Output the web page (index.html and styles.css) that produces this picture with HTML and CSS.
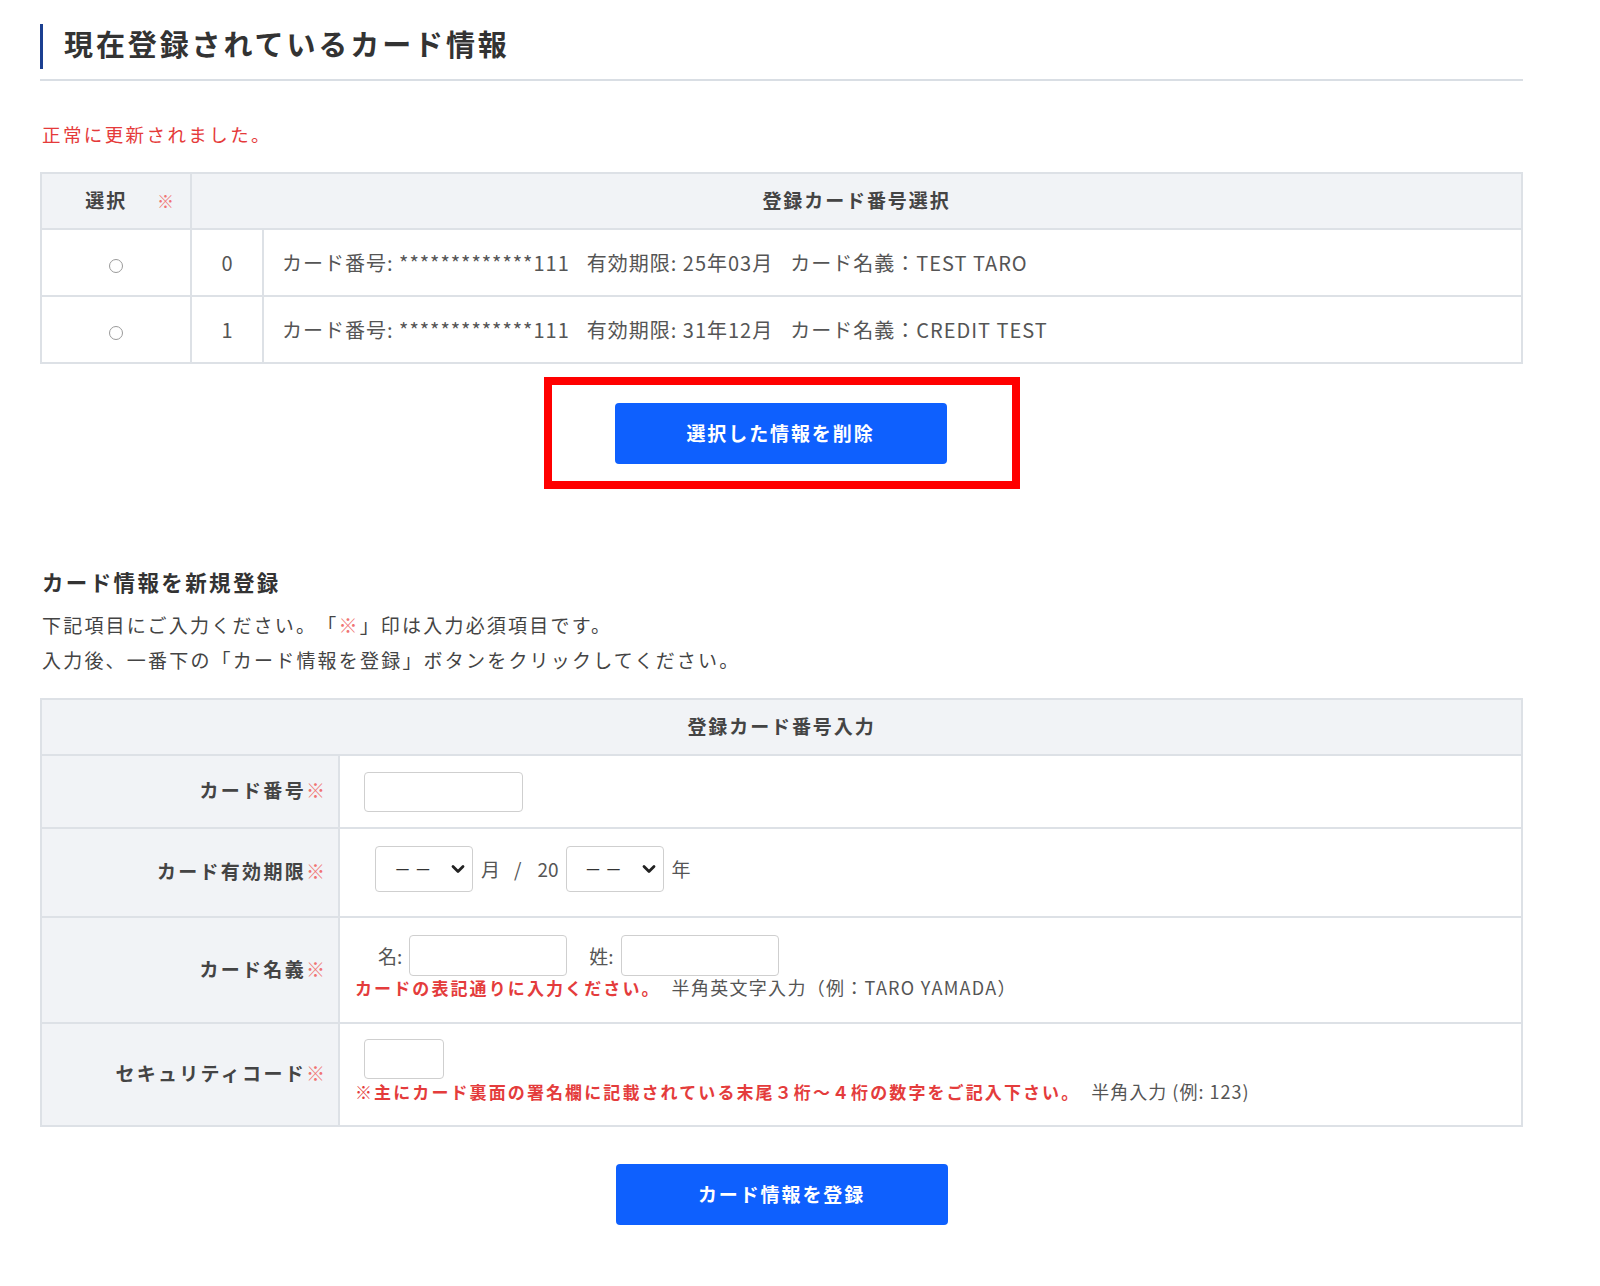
FILE: index.html
```html
<!DOCTYPE html>
<html lang="ja">
<head>
<meta charset="utf-8">
<title>カード情報</title>
<link rel="stylesheet" href="styles.css">
</head>
<body>
<div class="page">
  <div class="title-wrap">
    <h2 class="title">現在登録されているカード情報</h2>
  </div>
  <p class="msg">正常に更新されました。</p>

  <table class="cards">
    <tr class="head">
      <th class="c-sel">選択<span class="req req-gap">※</span></th>
      <th colspan="2">登録カード番号選択</th>
    </tr>
    <tr>
      <td class="c-sel center"><span class="radio"></span></td>
      <td class="c-no center">0</td>
      <td class="c-info"><span class="seg">カード番号: *************111</span><span class="seg">有効期限: 25年03月</span><span>カード名義：TEST TARO</span></td>
    </tr>
    <tr>
      <td class="c-sel center"><span class="radio"></span></td>
      <td class="c-no center">1</td>
      <td class="c-info"><span class="seg">カード番号: *************111</span><span class="seg">有効期限: 31年12月</span><span>カード名義：CREDIT TEST</span></td>
    </tr>
  </table>

  <div class="actions">
    <div class="highlight">
      <button class="btn" type="button">選択した情報を削除</button>
    </div>
  </div>

  <h3 class="sub">カード情報を新規登録</h3>
  <p class="note">下記項目にご入力ください。「<span class="req">※</span>」印は入力必須項目です。<br>入力後、一番下の「カード情報を登録」ボタンをクリックしてください。</p>

  <table class="form">
    <tr class="head">
      <th colspan="2">登録カード番号入力</th>
    </tr>
    <tr class="r1">
      <th class="lbl">カード番号<span class="req">※</span></th>
      <td class="val"><input class="inp inp-num" type="text"></td>
    </tr>
    <tr class="r2">
      <th class="lbl">カード有効期限<span class="req">※</span></th>
      <td class="val">
        <div class="exp">
          <div class="sel">
            <select><option>－－</option></select>
            <svg class="chev" width="14" height="10" viewBox="0 0 14 10"><path d="M2 2.5 L7 7.5 L12 2.5" fill="none" stroke="#222" stroke-width="2.8" stroke-linecap="round" stroke-linejoin="round"/></svg>
          </div>
          <span class="unit u-month">月</span>
          <span class="unit slash">/</span>
          <span class="unit u-20">20</span>
          <div class="sel sel2">
            <select><option>－－</option></select>
            <svg class="chev" width="14" height="10" viewBox="0 0 14 10"><path d="M2 2.5 L7 7.5 L12 2.5" fill="none" stroke="#222" stroke-width="2.8" stroke-linecap="round" stroke-linejoin="round"/></svg>
          </div>
          <span class="unit u-year">年</span>
        </div>
      </td>
    </tr>
    <tr class="r3">
      <th class="lbl">カード名義<span class="req">※</span></th>
      <td class="val">
        <div class="names">
          <label class="nm">名:</label><input class="inp inp-name" type="text">
          <label class="nm nm2">姓:</label><input class="inp inp-name" type="text">
        </div>
        <p class="hint"><span class="hint-red">カードの表記通りに入力ください。</span><span class="hint-gray">半角英文字入力（例：TARO YAMADA）</span></p>
      </td>
    </tr>
    <tr class="r4">
      <th class="lbl">セキュリティコード<span class="req">※</span></th>
      <td class="val">
        <input class="inp inp-cvc" type="text">
        <p class="hint"><span class="hint-red">※主にカード裏面の署名欄に記載されている末尾３桁～４桁の数字をご記入下さい。</span><span class="hint-gray">半角入力 (例: 123)</span></p>
      </td>
    </tr>
  </table>

  <div class="actions2">
    <button class="btn" type="button">カード情報を登録</button>
  </div>
</div>
</body>
</html>
```
FILE: styles.css
```css
* { box-sizing: border-box; }
html, body { margin: 0; padding: 0; background: #fff; }
body {
  font-family: "Noto Sans CJK JP", "Noto Sans", sans-serif;
  color: #333;
  font-size: 19px;
  text-spacing-trim: space-all;
}
.page {
  width: 1483px;
  margin-left: 40px;
  padding-top: 24px;
  padding-bottom: 60px;
}
.title-wrap {
  border-bottom: 2px solid #d9dee4;
  padding-bottom: 10px;
}
.title {
  margin: 0;
  border-left: 3px solid #1b3f91;
  padding-left: 21px;
  height: 45px;
  line-height: 38px;
  font-size: 29px;
  font-weight: 700;
  letter-spacing: 0.1em;
  color: #333;
}
.msg {
  margin: 40px 0 0 2px;
  font-size: 18.5px;
  line-height: 26px;
  letter-spacing: 0.13em;
  color: #e53a3a;
}
.req { color: #f07373; font-weight: 400; }
.req-gap { margin-left: 30px; font-size: 17px; }

table {
  border-collapse: collapse;
  width: 100%;
}
th, td {
  border: 2px solid #dde1e6;
  padding: 0;
}
.cards { margin-top: 25px; }
.cards .head th {
  background: #f1f3f6;
  height: 56px;
  font-size: 19px;
  font-weight: 700;
  letter-spacing: 0.1em;
  color: #444;
  text-align: center;
  padding-bottom: 3px;
}
.cards .head th.c-sel { text-align: right; padding-right: 14px; }
.cards td { height: 67px; font-size: 20px; color: #555; }
.c-sel { width: 150px; }
.c-no { width: 72px; letter-spacing: 0; }
.center { text-align: center; }
.c-info { padding-left: 18px; letter-spacing: 0.05em; }
.seg { margin-right: 17px; }
.radio {
  display: inline-block;
  width: 14px;
  height: 14px;
  border: 1.5px solid #9a9a9a;
  border-radius: 50%;
  background: #fff;
  vertical-align: middle;
  margin-top: 0;
}

.actions {
  display: flex;
  justify-content: center;
  margin-top: 13px;
}
.highlight {
  border: 8px solid #ff0000;
  padding: 18px 65px 17px 63px;
}
.btn {
  display: block;
  width: 332px;
  height: 61px;
  border: none;
  border-radius: 4px;
  background: #0e60fe;
  color: #fff;
  font-family: "Noto Sans CJK JP", "Noto Sans", sans-serif;
  font-size: 19px;
  font-weight: 700;
  letter-spacing: 0.1em;
  padding: 0 0 2px 0;
}

.sub {
  margin: 79px 0 0 2px;
  font-size: 21.5px;
  line-height: 28px;
  font-weight: 700;
  letter-spacing: 0.11em;
  color: #333;
}
.note {
  margin: 11px 0 0 2px;
  font-size: 19px;
  line-height: 35px;
  letter-spacing: 2.2px;
  color: #444;
}

.form { margin-top: 21px; }
.form .head th {
  background: #f1f3f6;
  height: 56px;
  font-size: 19px;
  font-weight: 700;
  letter-spacing: 0.1em;
  color: #444;
  text-align: center;
  padding-bottom: 4px;
}
.lbl {
  width: 298px;
  background: #f1f3f6;
  text-align: right;
  padding-right: 13px;
  padding-bottom: 4px;
  font-size: 19px;
  font-weight: 700;
  letter-spacing: 2.3px;
  color: #444;
}
.lbl .req { letter-spacing: 0; }
.val { padding-left: 24px; }
.r1 th, .r1 td { height: 73px; }
.r2 th, .r2 td { height: 89px; }
.r3 th, .r3 td { height: 106px; }
.r4 th, .r4 td { height: 103px; }
.r2 .val { padding-bottom: 8px; }
.r3 .val { padding-bottom: 6px; }
.r4 .val { padding-bottom: 7px; }

.inp {
  display: block;
  height: 40px;
  border: 1.5px solid #cfcfcf;
  border-radius: 4px;
  background: #fff;
  font-size: 16px;
}
.inp-num { width: 159px; }
.inp-cvc { width: 80px; }
.inp-name { width: 158px; height: 41px; display: inline-block; }

.exp {
  display: flex;
  align-items: center;
  margin-left: 11px;
}
.sel {
  position: relative;
  width: 98px;
  height: 46px;
}
.sel select {
  appearance: none;
  -webkit-appearance: none;
  width: 98px;
  height: 46px;
  border: 1.5px solid #cfcfcf;
  border-radius: 4px;
  background: #fff;
  font-family: "Noto Sans CJK JP", sans-serif;
  font-size: 17px;
  letter-spacing: 3.5px;
  color: #333;
  padding-left: 18px;
}
.chev {
  position: absolute;
  right: 8px;
  top: 18px;
  pointer-events: none;
}
.unit {
  font-size: 19px;
  color: #555;
}
.u-month { margin-left: 8px; }
.slash { margin-left: 14px; }
.u-20 { margin-left: 16px; }
.sel2 { margin-left: 7px; }
.u-year { margin-left: 8px; }

.names {
  display: flex;
  align-items: center;
  margin-left: 14px;
}
.nm {
  font-size: 19px;
  color: #555;
  margin-right: 7px;
}
.nm2 { margin-left: 22px; }
.hint {
  margin: -1px 0 0 -9px;
  font-size: 17px;
  line-height: 24px;
}
.r4 .hint { margin-top: 0; }
.hint-red { color: #e43c3c; font-weight: 700; margin-right: 11px; letter-spacing: 2.1px; }
.hint-gray { color: #555; font-size: 18px; letter-spacing: 1.3px; }
.r4 .hint-gray { letter-spacing: 1px; }

.actions2 {
  display: flex;
  justify-content: center;
  margin-top: 37px;
}
```
